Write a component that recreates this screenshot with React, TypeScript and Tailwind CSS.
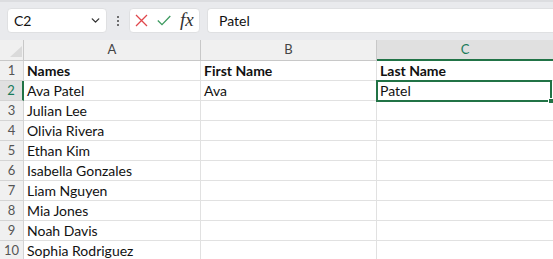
import React from 'react';
import { ChevronDown } from 'lucide-react';

const names = [
  'Ava Patel',
  'Julian Lee',
  'Olivia Rivera',
  'Ethan Kim',
  'Isabella Gonzales',
  'Liam Nguyen',
  'Mia Jones',
  'Noah Davis',
  'Sophia Rodriguez',
];

const font = { fontFamily: 'Lato, "Open Sans", sans-serif' };

export default function App() {
  const rows: { a: string; b: string; c: string; bold?: boolean }[] = [
    { a: 'Names', b: 'First Name', c: 'Last Name', bold: true },
    ...names.map((n, i) => ({ a: n, b: i === 0 ? 'Ava' : '', c: i === 0 ? 'Patel' : '' })),
  ];

  return (
    <div className="w-[553px] h-[259px] overflow-hidden bg-white text-[#111]" style={font}>
      {/* formula bar */}
      <div className="h-[40px] bg-[#e9eaed] border-t-[2px] border-[#dcdde0] flex items-start pt-[6px] pl-[7px]">
        <div className="w-[100px] h-[25px] bg-white rounded-[4px] border border-[#dfe0e2] flex items-center justify-between pl-[6px] pr-[4px] text-[14px]">
          <span>C2</span>
          <ChevronDown className="w-[13px] h-[13px] text-[#333]" strokeWidth={2.5} />
        </div>
        <div className="w-[22px] h-[25px] flex flex-col items-center justify-center gap-[2px]">
          <span className="w-[2px] h-[2px] bg-[#444] rounded-full" />
          <span className="w-[2px] h-[2px] bg-[#444] rounded-full" />
          <span className="w-[2px] h-[2px] bg-[#444] rounded-full" />
        </div>
        <div className="w-[71px] h-[25px] bg-white rounded-[4px] border border-[#dfe0e2] flex items-center pl-[5px] gap-[9px]">
          <svg width="13" height="13" viewBox="0 0 13 13">
            <path d="M1 1 L12 12 M12 1 L1 12" stroke="#e0474c" strokeWidth="1.3" fill="none" />
          </svg>
          <svg width="14" height="11" viewBox="0 0 14 11">
            <path d="M0.8 5.5 L5 9.6 L13.3 1" stroke="#3c9a5f" strokeWidth="1.3" fill="none" />
          </svg>
          <span className="text-[19px] italic text-[#333] leading-none -mt-[2px]" style={{ fontFamily: '"Liberation Serif", serif' }}>
            fx
          </span>
        </div>
        <div className="ml-[7px] flex-1 h-[25px] bg-white rounded-l-[4px] border border-r-0 border-[#dfe0e2] flex items-center pl-[11px] text-[14px]">
          Patel
        </div>
      </div>

      {/* sheet */}
      <div className="relative">
        <div className="grid grid-cols-[24px_177px_176px_176px] text-[14px]">
          {/* header row */}
          <div className="h-[21px] bg-[#f0f0f0] border-r border-b border-[#c8c8c8] flex items-end justify-end pr-[1px] pb-[3px]">
            <svg width="12" height="11" viewBox="0 0 12 11">
              <path d="M12 0 L12 11 L0 11 Z" fill="#dadada" />
            </svg>
          </div>
          <div className="h-[21px] bg-[#f0f0f0] border-r border-b border-[#c8c8c8] flex items-center justify-center text-[13px] text-[#444]">A</div>
          <div className="h-[21px] bg-[#f0f0f0] border-r border-b border-[#c8c8c8] flex items-center justify-center text-[13px] text-[#444]">B</div>
          <div className="h-[21px] bg-[#e0e0e0] border-b-[2px] border-[#217346] flex items-center justify-center text-[13px] text-[#1a7a5a]">C</div>

          {rows.map((r, i) => {
            const sel = i === 1;
            return (
              <React.Fragment key={i}>
                <div
                  className={
                    sel
                      ? 'h-[20px] bg-[#e0e0e0] border-r-[2px] border-r-[#217346] border-b border-b-[#d4d4d4] flex items-center justify-center text-[13px] text-[#1a7a5a]'
                      : 'h-[20px] bg-[#f0f0f0] border-r border-b border-[#d4d4d4] flex items-center justify-center text-[13px] text-[#555]'
                  }
                >
                  {i + 1}
                </div>
                <div className={`h-[20px] border-r border-b border-[#e1e1e1] flex items-center pl-[3px] ${r.bold ? 'font-bold' : ''}`}>{r.a}</div>
                <div className={`h-[20px] border-r border-b border-[#e1e1e1] flex items-center pl-[3px] ${r.bold ? 'font-bold' : ''}`}>{r.b}</div>
                <div className={`h-[20px] border-b border-[#e1e1e1] flex items-center pl-[3px] ${r.bold ? 'font-bold' : ''}`}>{r.c}</div>
              </React.Fragment>
            );
          })}
        </div>

        {/* selection */}
        <div className="absolute left-[376px] top-[40px] w-[176px] h-[22px] border-[2px] border-[#217346] pointer-events-none">
          <div className="absolute right-[-4px] bottom-[-4px] w-[6px] h-[6px] bg-[#217346] border border-white" />
        </div>
      </div>
    </div>
  );
}
